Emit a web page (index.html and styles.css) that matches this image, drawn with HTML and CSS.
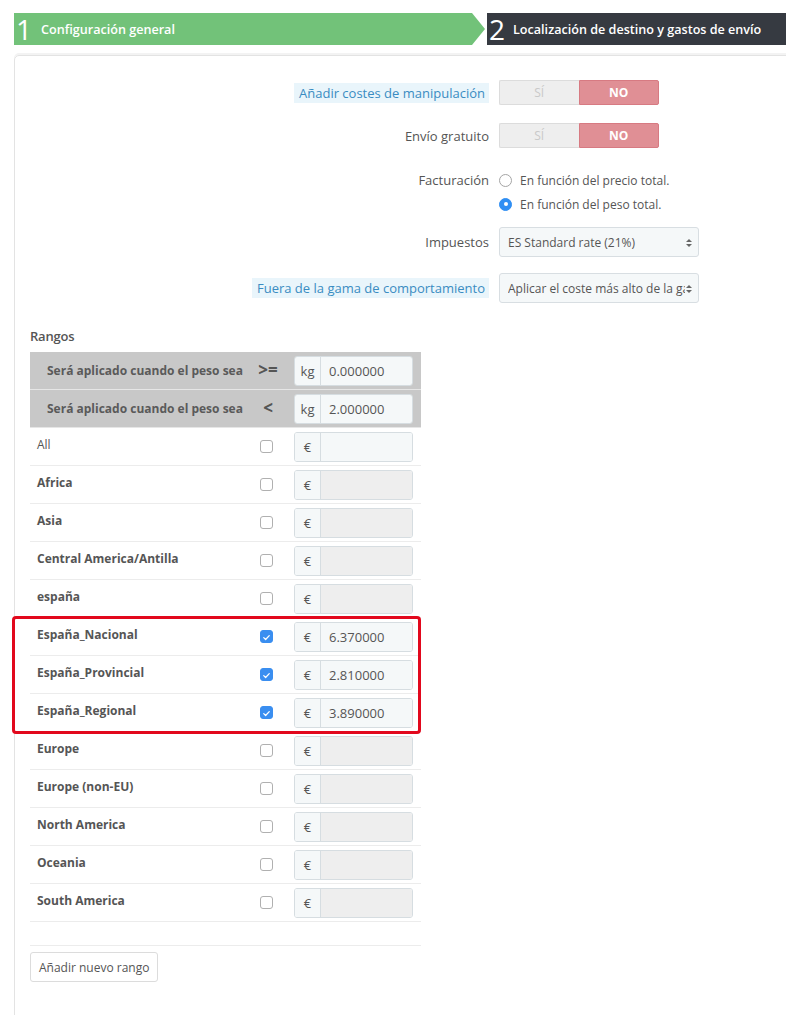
FILE: index.html
```html
<!DOCTYPE html>
<html lang="es">
<head>
<meta charset="utf-8">
<title>Transportista</title>
<link rel="stylesheet" href="styles.css">
</head>
<body>
<div class="steps">
  <div class="step step-done"><span class="num">1</span><span class="step-title">Configuración general</span></div>
  <div class="step step-current"><span class="num">2</span><span class="step-title">Localización de destino y gastos de envío</span></div>
</div>

<div class="panel">
  <div class="form">
    <div class="frow">
      <div class="lbl"><span class="tip">Añadir costes de manipulación</span></div>
      <div class="switch"><span class="yes">SÍ</span><span class="no">NO</span></div>
    </div>
    <div class="frow r2">
      <div class="lbl">Envío gratuito</div>
      <div class="switch"><span class="yes">SÍ</span><span class="no">NO</span></div>
    </div>
    <div class="frow r3 top">
      <div class="lbl">Facturación</div>
      <div class="radios">
        <div class="radio"><span class="rb"></span>En función del precio total.</div>
        <div class="radio"><span class="rb on"></span>En función del peso total.</div>
      </div>
    </div>
    <div class="frow r4">
      <div class="lbl">Impuestos</div>
      <div class="select">ES Standard rate (21%)<span class="caret"></span></div>
    </div>
    <div class="frow r5">
      <div class="lbl"><span class="tip">Fuera de la gama de comportamiento</span></div>
      <div class="select"><span class="clip">Aplicar el coste más alto de la gama definida</span><span class="caret"></span></div>
    </div>
  </div>

  <div class="ranges">
    <div class="ranges-title">Rangos</div>
    <div class="tbl">
      <div class="row head"><div class="c-name">Será aplicado cuando el peso sea</div><div class="c-mid op">&gt;=</div><div class="c-in"><div class="ig"><span class="add">kg</span><span class="val">0.000000</span></div></div></div>
      <div class="row head"><div class="c-name">Será aplicado cuando el peso sea</div><div class="c-mid op">&lt;</div><div class="c-in"><div class="ig"><span class="add">kg</span><span class="val">2.000000</span></div></div></div>

      <div class="row"><div class="c-name normal">All</div><div class="c-mid"><span class="cb"></span></div><div class="c-in"><div class="ig"><span class="add">€</span><span class="val"></span></div></div></div>
      <div class="row"><div class="c-name">Africa</div><div class="c-mid"><span class="cb"></span></div><div class="c-in"><div class="ig"><span class="add">€</span><span class="val off"></span></div></div></div>
      <div class="row"><div class="c-name">Asia</div><div class="c-mid"><span class="cb"></span></div><div class="c-in"><div class="ig"><span class="add">€</span><span class="val off"></span></div></div></div>
      <div class="row"><div class="c-name">Central America/Antilla</div><div class="c-mid"><span class="cb"></span></div><div class="c-in"><div class="ig"><span class="add">€</span><span class="val off"></span></div></div></div>
      <div class="row"><div class="c-name">españa</div><div class="c-mid"><span class="cb"></span></div><div class="c-in"><div class="ig"><span class="add">€</span><span class="val off"></span></div></div></div>

      <div class="hl">
        <div class="row"><div class="c-name">España_Nacional</div><div class="c-mid"><span class="cb on"><svg viewBox="0 0 14 14"><path d="M3.5 7.2l2.4 2.4 4.6-5" fill="none" stroke="#fff" stroke-width="1.6" stroke-linecap="round" stroke-linejoin="round"/></svg></span></div><div class="c-in"><div class="ig"><span class="add">€</span><span class="val">6.370000</span></div></div></div>
        <div class="row"><div class="c-name">España_Provincial</div><div class="c-mid"><span class="cb on"><svg viewBox="0 0 14 14"><path d="M3.5 7.2l2.4 2.4 4.6-5" fill="none" stroke="#fff" stroke-width="1.6" stroke-linecap="round" stroke-linejoin="round"/></svg></span></div><div class="c-in"><div class="ig"><span class="add">€</span><span class="val">2.810000</span></div></div></div>
        <div class="row"><div class="c-name">España_Regional</div><div class="c-mid"><span class="cb on"><svg viewBox="0 0 14 14"><path d="M3.5 7.2l2.4 2.4 4.6-5" fill="none" stroke="#fff" stroke-width="1.6" stroke-linecap="round" stroke-linejoin="round"/></svg></span></div><div class="c-in"><div class="ig"><span class="add">€</span><span class="val">3.890000</span></div></div></div>
      </div>

      <div class="row"><div class="c-name">Europe</div><div class="c-mid"><span class="cb"></span></div><div class="c-in"><div class="ig"><span class="add">€</span><span class="val off"></span></div></div></div>
      <div class="row"><div class="c-name">Europe (non-EU)</div><div class="c-mid"><span class="cb"></span></div><div class="c-in"><div class="ig"><span class="add">€</span><span class="val off"></span></div></div></div>
      <div class="row"><div class="c-name">North America</div><div class="c-mid"><span class="cb"></span></div><div class="c-in"><div class="ig"><span class="add">€</span><span class="val off"></span></div></div></div>
      <div class="row"><div class="c-name">Oceania</div><div class="c-mid"><span class="cb"></span></div><div class="c-in"><div class="ig"><span class="add">€</span><span class="val off"></span></div></div></div>
      <div class="row"><div class="c-name">South America</div><div class="c-mid"><span class="cb"></span></div><div class="c-in"><div class="ig"><span class="add">€</span><span class="val off"></span></div></div></div>
    </div>
    <div class="tbl-foot"></div>
    <button class="btn">Añadir nuevo rango</button>
  </div>
</div>
</body>
</html>
```

FILE: styles.css
```css
html, body {
  margin: 0;
  padding: 0;
  background: #fff;
  overflow: hidden;
}
body {
  font-family: "Open Sans", "Liberation Sans", sans-serif;
  font-size: 13px;
  color: #555;
  width: 786px;
  height: 1015px;
}

/* steps */
.steps {
  display: flex;
  margin: 13px 0 0 14px;
  height: 32px;
}
.step {
  display: flex;
  align-items: center;
  height: 32px;
  color: #fff;
  box-sizing: border-box;
}
.step-done {
  width: 458px;
  background: #72c279;
  position: relative;
  padding-left: 2px;
}
.step-done::after {
  content: "";
  position: absolute;
  right: -13px;
  top: 0;
  border-left: 13px solid #72c279;
  border-top: 16px solid transparent;
  border-bottom: 16px solid transparent;
}
.step-current {
  margin-left: 15px;
  flex: 1;
  background: #363a41;
  padding-left: 2px;
}
.num {
  font-size: 28px;
  font-weight: 400;
  line-height: 32px;
  margin-right: 8px;
}
.step-done .num { margin-right: 9px; }
.step-title {
  font-size: 12.6px;
  font-weight: 600;
}

/* panel */
.panel {
  margin: 10px -20px 0 14px;
  border: 1px solid #e3e3e3;
  border-radius: 5px;
  box-shadow: 0 -2px 0 #f3f3f3;
  height: 1000px;
  padding-top: 24px;
}

.form { display: flex; flex-direction: column; }
.frow {
  display: flex;
  align-items: center;
  gap: 10px;
}
.frow.top { align-items: flex-start; }
.r2 { margin-top: 18px; }
.r3 { margin-top: 22px; }
.r4 { margin-top: 13px; }
.r5 { margin-top: 16px; }
.lbl {
  width: 474px;
  flex: none;
  text-align: right;
  color: #555;
  line-height: 20px;
}
.tip {
  display: inline-block;
  background: #e9f5fb;
  color: #3a8cc2;
  padding: 1px 4px 1px 5px;
  line-height: 18px;
}
.switch {
  display: flex;
  width: 160px;
  height: 25px;
  font-size: 12px;
  font-weight: 700;
}
.switch span {
  flex: 1;
  display: flex;
  align-items: center;
  justify-content: center;
  box-sizing: border-box;
}
.switch .yes {
  background: #eeeeee;
  color: #c9c9c9;
  font-weight: 400;
  border: 1px solid #dcdcdc;
  border-right: none;
  border-radius: 2px 0 0 2px;
}
.switch .no {
  background: #e08f95;
  color: #fff;
  border: 1px solid #d77a82;
  border-radius: 0 2px 2px 0;
}

.radios { display: flex; flex-direction: column; gap: 4px; }
.radio {
  display: flex;
  align-items: center;
  height: 20px;
  font-size: 12px;
  color: #555;
}
.rb {
  width: 11px;
  height: 11px;
  border: 1px solid #a5a5a5;
  border-radius: 50%;
  margin: 0 8px 0 0;
  position: relative;
}
.rb.on {
  background: #2f8ef3;
  border-color: #2f8ef3;
}
.rb.on::after {
  content: "";
  position: absolute;
  width: 4px;
  height: 4px;
  background: #fff;
  border-radius: 50%;
  left: 3.5px;
  top: 3.5px;
}

.select {
  position: relative;
  width: 200px;
  height: 30px;
  box-sizing: border-box;
  border: 1px solid #d8dee2;
  border-radius: 3px;
  background: #f5f8f9;
  display: flex;
  align-items: center;
  padding: 0 13px 0 8px;
  white-space: nowrap;
  font-size: 12px;
  color: #555;
}
.clip { overflow: hidden; }
.caret {
  position: absolute;
  right: 6px;
  top: 11px;
  width: 0;
  height: 0;
  border-left: 3px solid transparent;
  border-right: 3px solid transparent;
  border-bottom: 3px solid #666;
}
.caret::after {
  content: "";
  position: absolute;
  left: -3px;
  top: 5px;
  border-left: 3px solid transparent;
  border-right: 3px solid transparent;
  border-top: 3px solid #666;
}

/* ranges */
.ranges {
  margin: 24px 0 0 15px;
  width: 391px;
}
.ranges-title {
  font-weight: 600;
  font-size: 13px;
  color: #555;
  line-height: 18px;
  margin-bottom: 7px;
  letter-spacing: -0.2px;
}
.tbl { display: flex; flex-direction: column; }
.row {
  display: grid;
  grid-template-columns: 220px 36px 135px;
  height: 38px;
  box-sizing: border-box;
  border-bottom: 1px solid #ececec;
  align-items: center;
}
.row.head {
  background: #c8c8c8;
  border-bottom: 1px solid #e6e6e6;
}
.c-name {
  padding-left: 7px;
  font-weight: 700;
  color: #555;
  margin-top: -4px;
  font-size: 12px;
}
.c-name.normal { font-weight: 400; }
.row.head .c-name {
  padding-left: 17px;
  margin-top: 0;
  color: #5a5a5a;
  font-size: 12px;
}
.c-mid {
  display: flex;
  justify-content: center;
}
.op {
  font-size: 17px;
  font-weight: 700;
  color: #555;
  margin-top: -3px;
}
.c-in { padding: 0 8px; }
.ig {
  display: flex;
  height: 30px;
  box-sizing: border-box;
  border: 1px solid #d6dde1;
  border-radius: 3px;
  overflow: hidden;
}
.add {
  width: 25px;
  flex: none;
  display: flex;
  align-items: center;
  justify-content: center;
  background: #f5f8f9;
  border-right: 1px solid #d6dde1;
  color: #555;
}
.val {
  flex: 1;
  background: #f5f8f9;
  display: flex;
  align-items: center;
  padding-left: 8px;
  color: #555;
}
.val.off { background: #eeeeee; }
.cb {
  width: 13px;
  height: 13px;
  border: 1px solid #b0b0b0;
  border-radius: 3px;
  box-sizing: border-box;
  background: #fff;
  display: flex;
  margin-left: -3px;
}
.cb.on {
  background: #3a8ef0;
  border-color: #3a8ef0;
}
.cb svg { width: 13px; height: 13px; }

.hl { position: relative; }
.hl::before {
  content: "";
  position: absolute;
  left: -18px;
  right: 0;
  top: -2px;
  bottom: -2px;
  border: 3px solid #e2081d;
  border-radius: 4px;
  pointer-events: none;
}

.tbl-foot {
  height: 23px;
  border-bottom: 1px solid #ececec;
}
.btn {
  display: block;
  margin-top: 6px;
  font-family: "Open Sans", "Liberation Sans", sans-serif;
  font-size: 12px;
  color: #555;
  background: #fff;
  border: 1px solid #dcdcdc;
  border-radius: 3px;
  height: 30px;
  padding: 0 8px;
  white-space: nowrap;
}
```
